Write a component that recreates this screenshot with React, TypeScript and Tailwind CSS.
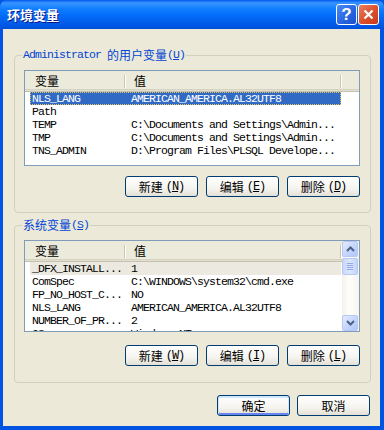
import React from 'react'

const cjk = "font-['Noto_Sans_CJK_SC',sans-serif]"
const mono = "font-['Liberation_Mono','Noto_Sans_CJK_SC',monospace] text-[11.5px] tracking-[-0.9px]"

const userVars = [
  ['NLS_LANG', 'AMERICAN_AMERICA.AL32UTF8'],
  ['Path', ''],
  ['TEMP', 'C:\\Documents and Settings\\Admin...'],
  ['TMP', 'C:\\Documents and Settings\\Admin...'],
  ['TNS_ADMIN', 'D:\\Program Files\\PLSQL Develope...'],
]

const sysVars = [
  ['_DFX_INSTALL...', '1'],
  ['ComSpec', 'C:\\WINDOWS\\system32\\cmd.exe'],
  ['FP_NO_HOST_C...', 'NO'],
  ['NLS_LANG', 'AMERICAN_AMERICA.AL32UTF8'],
  ['NUMBER_OF_PR...', '2'],
  ['OS', 'Windows_NT'],
]

function Btn({ label, hot, isDefault }: { label: string; hot?: string; isDefault?: boolean }) {
  return (
    <button
      className={`w-[73px] h-[21px] rounded-[3px] border border-[#003C74] bg-[linear-gradient(180deg,#FFFFFF_0%,#F5F4EF_60%,#E3E0D6_100%)] flex items-center justify-center text-[12px] text-black ${cjk} ${
        isDefault ? 'shadow-[inset_0_1px_0_1px_#CEE7FF,inset_0_-1px_0_1px_#6982EE]' : ''
      }`}
    >
      <span>{label}</span>
      {hot && (
        <span className="ml-[3px] font-['Liberation_Mono',monospace] text-[12px] tracking-[-1px]">
          (<span className="underline">{hot}</span>)
        </span>
      )}
    </button>
  )
}

function Header() {
  return (
    <div className="flex h-[21px] bg-[#EBEADB] shadow-[inset_0_-1px_#C5C2B2,inset_0_-2px_#E2DED0,inset_0_-3px_#D6D2C2] text-[12px] text-black">
      <div className={`w-[99px] pl-[10px] pt-[1px] ${cjk}`}>变量</div>
      <div className="w-[1px] mt-[4px] h-[13px] bg-[#C7C5B2]" />
      <div className="w-[1px] mt-[4px] h-[13px] bg-white" />
      <div className={`w-[214px] pl-[8px] pt-[1px] ${cjk}`}>值</div>
      <div className="w-[1px] mt-[4px] h-[13px] bg-[#C7C5B2]" />
      <div className="w-[1px] mt-[4px] h-[13px] bg-white" />
    </div>
  )
}

function Row({ name, value, mode }: { name: string; value: string; mode?: 'sel' | 'grey' }) {
  const bg =
    mode === 'sel'
      ? 'bg-[#316AC5] text-white outline outline-1 outline-dotted outline-[#E8C55A] -outline-offset-1'
      : mode === 'grey'
      ? 'bg-[#ECE9E0] text-black'
      : 'text-black'
  return (
    <div className={`ml-[5px] w-[311px] h-[13px] flex items-center leading-[12px] whitespace-pre ${mono} ${bg}`}>
      <div className="w-[99px] pl-[2px] overflow-hidden">{name}</div>
      <div className="pl-[2px]">{value}</div>
    </div>
  )
}

function ScrollBtn({ dir }: { dir: 'up' | 'down' }) {
  return (
    <div className="w-[16px] h-[16px] rounded-[2px] border border-[#B5C9F3] bg-[linear-gradient(135deg,#E3EBFE_0%,#C2D3FC_60%,#B2C6F7_100%)] flex items-center justify-center">
      <svg width="9" height="6" viewBox="0 0 9 6">
        {dir === 'up' ? (
          <path d="M1 5 L4.5 1.5 L8 5" fill="none" stroke="#4D6185" strokeWidth="2" />
        ) : (
          <path d="M1 1 L4.5 4.5 L8 1" fill="none" stroke="#4D6185" strokeWidth="2" />
        )}
      </svg>
    </div>
  )
}

function GroupBox({ legend, children }: { legend: React.ReactNode; children: React.ReactNode }) {
  return (
    <div className="relative h-[158px] border border-[#D0D0BF] rounded-[4px] pt-[14px] pl-[9px] pr-[10px]">
      <div className="absolute -top-[8px] left-[7px] px-[1px] bg-[#ECE9D8] text-[12px] leading-[14px] text-[#0046D5] flex items-center whitespace-pre">
        {legend}
      </div>
      {children}
    </div>
  )
}

export default function App() {
  return (
    <div className="w-[384px] h-[430px] flex flex-col bg-[#0054E3] select-none">
      {/* title bar */}
      <div className="h-[29px] rounded-t-[7px] flex items-center bg-[linear-gradient(180deg,#0058EE_0%,#3A93FF_10%,#288EFF_18%,#127DFF_30%,#036FFC_50%,#0262EE_70%,#0057E5_88%,#0050D8_100%)]">
        <div className={`ml-[7px] text-white font-bold text-[13px] [text-shadow:1px_1px_#0A1883] ${cjk}`}>环境变量</div>
        <div className="ml-auto mr-[5px] flex gap-[1px]">
          <div className="w-[21px] h-[21px] rounded-[3px] border border-white bg-[linear-gradient(135deg,#4C8BF5_0%,#2663E0_60%,#1D4FCC_100%)] flex items-center justify-center text-white font-bold text-[17px] leading-none font-['Liberation_Sans',sans-serif]">
            ?
          </div>
          <div className="w-[21px] h-[21px] rounded-[3px] border border-white bg-[linear-gradient(135deg,#E98062_0%,#DC4E2B_55%,#C4391C_100%)] flex items-center justify-center">
            <svg width="11" height="11" viewBox="0 0 11 11">
              <path d="M1.5 1.5 L9.5 9.5 M9.5 1.5 L1.5 9.5" stroke="white" strokeWidth="2.2" />
            </svg>
          </div>
        </div>
      </div>

      {/* client */}
      <div className="flex-1 ml-[3px] mr-[4px] mb-[4px] bg-[#ECE9D8] flex flex-col pl-[11px] pr-[9px] pt-[26px]">
        <GroupBox
          legend={
            <>
              <span className={mono}>Administrator </span>
              <span className={cjk}>的用户变量</span>
              <span className={mono}>
                (<span className="underline">U</span>)
              </span>
            </>
          }
        >
          <div className="h-[96px] border border-[#7F9DB9] bg-white overflow-hidden">
            <Header />
            {userVars.map((v, i) => (
              <Row key={v[0]} name={v[0]} value={v[1]} mode={i === 0 ? 'sel' : undefined} />
            ))}
          </div>
          <div className="mt-[10px] flex justify-end gap-[8px]">
            <Btn label="新建" hot="N" />
            <Btn label="编辑" hot="E" />
            <Btn label="删除" hot="D" />
          </div>
        </GroupBox>

        <div className="mt-[12px]">
          <GroupBox
            legend={
              <>
                <span className={cjk}>系统变量</span>
                <span className={mono}>
                  (<span className="underline">S</span>)
                </span>
              </>
            }
          >
            <div className="h-[92px] border border-[#7F9DB9] bg-white flex overflow-hidden">
              <div className="flex-1 overflow-hidden">
                <Header />
                {sysVars.map((v, i) => (
                  <Row key={v[0]} name={v[0]} value={v[1]} mode={i === 0 ? 'grey' : undefined} />
                ))}
              </div>
              <div className="w-[17px] flex flex-col bg-[linear-gradient(90deg,#F3F1EC_0%,#FEFEFB_40%,#F5F4EF_100%)]">
                <ScrollBtn dir="up" />
                <div className="mt-[1px] w-[16px] h-[17px] rounded-[2px] border border-[#B5C9F3] bg-[linear-gradient(90deg,#C9D8FC_0%,#DCE6FE_50%,#C3D3FB_100%)] flex flex-col items-center justify-center gap-[1px]">
                  <div className="w-[6px] h-[1px] bg-[#8FA9E6]" />
                  <div className="w-[6px] h-[1px] bg-[#8FA9E6]" />
                  <div className="w-[6px] h-[1px] bg-[#8FA9E6]" />
                  <div className="w-[6px] h-[1px] bg-[#8FA9E6]" />
                </div>
                <div className="flex-1" />
                <ScrollBtn dir="down" />
              </div>
            </div>
            <div className="mt-[13px] flex justify-end gap-[8px]">
              <Btn label="新建" hot="W" />
              <Btn label="编辑" hot="I" />
              <Btn label="删除" hot="L" />
            </div>
          </GroupBox>
        </div>

        <div className="mt-[12px] flex justify-end gap-[7px] pr-[1px]">
          <Btn label="确定" isDefault />
          <Btn label="取消" />
        </div>
      </div>
    </div>
  )
}
